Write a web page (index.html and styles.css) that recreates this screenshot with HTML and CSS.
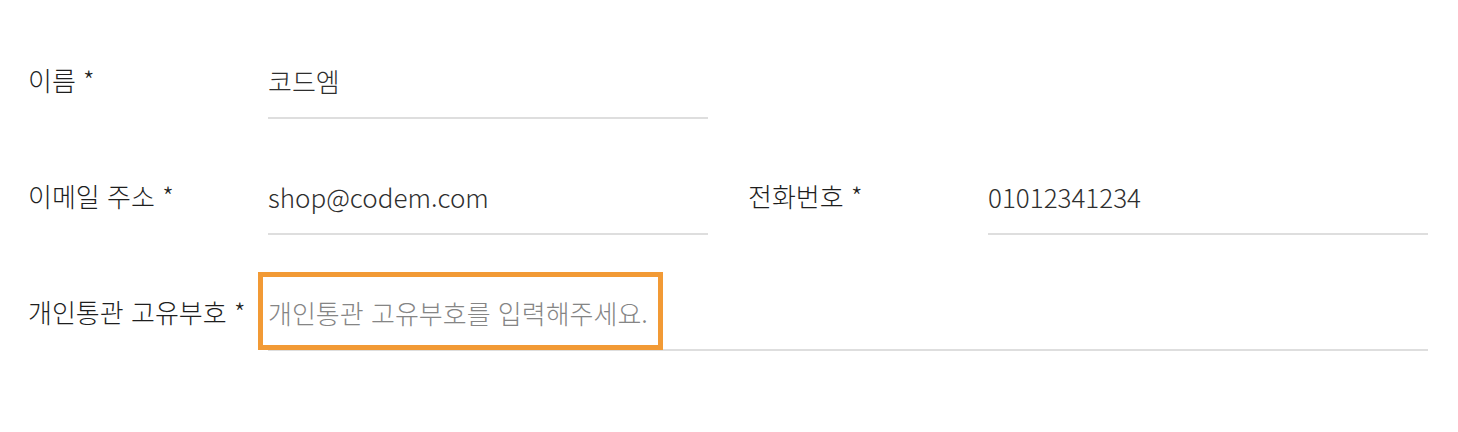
FILE: index.html
```html
<!DOCTYPE html>
<html lang="ko">
<head>
<meta charset="utf-8">
<link rel="stylesheet" href="styles.css">
</head>
<body>
<form class="form">
  <div class="row">
    <div class="field">
      <label class="label">이름 *</label>
      <input class="input" type="text" value="코드엠">
    </div>
  </div>
  <div class="row">
    <div class="field">
      <label class="label">이메일 주소 *</label>
      <input class="input" type="text" value="shop@codem.com">
    </div>
    <div class="field">
      <label class="label">전화번호 *</label>
      <input class="input" type="text" value="01012341234">
    </div>
  </div>
  <div class="row">
    <div class="field field-wide">
      <label class="label">개인통관 고유부호 *</label>
      <div class="input-wrap">
        <input class="input" type="text" placeholder="개인통관 고유부호를 입력해주세요.">
        <span class="highlight"></span>
      </div>
    </div>
  </div>
</form>
</body>
</html>
```
FILE: styles.css
```css
* { box-sizing: border-box; }
html, body { margin: 0; padding: 0; background: #fff; }
body {
  font-family: "Noto Sans CJK KR", "Noto Sans", sans-serif;
  color: #333;
}
.form {
  padding: 63px 30px 0 28px;
  display: flex;
  flex-direction: column;
  gap: 60px;
  width: 1458px;
}
.row {
  display: flex;
  gap: 40px;
}
.field {
  display: flex;
  width: 680px;
}
.field-wide { width: 1400px; }
.label {
  width: 240px;
  flex: none;
  font-size: 26px;
  font-weight: 300;
  line-height: 34px;
  color: #1e1e1e;
}
.input-wrap {
  position: relative;
  flex: 1;
  display: flex;
}
.input {
  flex: 1;
  min-width: 0;
  border: none;
  border-bottom: 2px solid #dedede;
  height: 56px;
  padding: 0 0 20px 0;
  font-family: inherit;
  font-size: 26px;
  font-weight: 300;
  line-height: 34px;
  color: #2e2e2e;
  outline: none;
  background: transparent;
}
.input::placeholder { color: #858585; }
.highlight {
  position: absolute;
  left: -10px;
  top: -23px;
  width: 405px;
  height: 78px;
  border: 5px solid #f29a35;
  pointer-events: none;
}
```
